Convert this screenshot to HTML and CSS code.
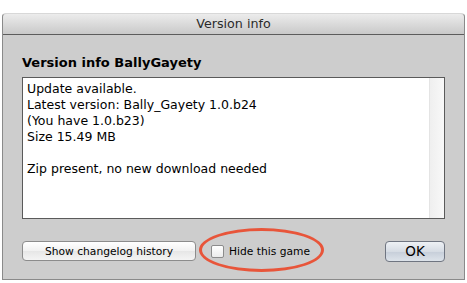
FILE: index.html
```html
<!DOCTYPE html>
<html>
<head>
	<title>Version info</title>
	<meta name="viewport" content="width=device-width, initial-scale=1" />
	<link rel="stylesheet" href="styles.css">
</head>
<body>
	<div class="window">
		<div class="titlebar">Version info</div>
		<div class="content">
			<h1 class="heading">Version info BallyGayety</h1>
			<div class="textbox">
				<div class="text">
					<div>Update available.</div>
					<div>Latest version: Bally_Gayety 1.0.b24</div>
					<div>(You have 1.0.b23)</div>
					<div>Size 15.49 MB</div>
					<div>&nbsp;</div>
					<div>Zip present, no new download needed</div>
				</div>
				<div class="scrolltrack"></div>
			</div>
			<div class="buttons">
				<button class="button btn-changelog">Show changelog history</button>
				<label class="check">
					<span class="box"></span>
					<span>Hide this game</span>
					<span class="ring"></span>
				</label>
				<div class="spacer"></div>
				<button class="button btn-ok">OK</button>
			</div>
		</div>
	</div>
</body>
</html>
```

FILE: styles.css
```css
body {
	margin: 0;
	background-color: #FFFFFF;
	font-family: "DejaVu Sans", "Liberation Sans", sans-serif;
	font-size: 12px;
	color: #000000;
}

.window {
	margin: 13px 2px 1px 2px;
	border: 1px solid #8a8a8a;
	border-top-color: #d8d8d8;
	border-radius: 4px 4px 0 0;
	background-color: #cdcdcd;
	height: 267px;
	box-sizing: border-box;
}

.titlebar {
	height: 20px;
	line-height: 19px;
	text-align: center;
	font-size: 12.7px;
	color: #2a2a2a;
	background: linear-gradient(#ececec, #c9c9c9);
	border-bottom: 1px solid #5c5c5c;
	border-radius: 4px 4px 0 0;
}

.content {
	padding: 0 19px 0 19px;
}

.heading {
	margin: 0;
	padding-top: 20px;
	height: 22px;
	font-size: 13px;
	font-weight: bold;
	line-height: 16px;
}

.textbox {
	display: flex;
	height: 142px;
	box-sizing: border-box;
	border: 1px solid #5a5a5a;
	background-color: #FFFFFF;
}

.text {
	flex: 1;
	padding: 3px 4px;
	line-height: 16px;
	font-size: 12.5px;
}

.scrolltrack {
	width: 14px;
	border-left: 1px solid #e4e4e4;
	background: linear-gradient(to right, #efefef, #f8f8f8);
}

.buttons {
	display: flex;
	align-items: center;
	margin-top: 22px;
	height: 20px;
}

.button {
	height: 20px;
	padding: 0;
	font-family: "DejaVu Sans", "Liberation Sans", sans-serif;
	font-size: 10.7px;
	color: #000000;
	border: 1px solid #8c8c8c;
	border-radius: 4px;
	background: linear-gradient(#ffffff, #f1f1f1 50%, #e6e6e6 51%, #f4f4f4);
}

.btn-changelog {
	width: 174px;
}

.btn-ok {
	width: 60px;
	height: 21px;
	font-size: 13.5px;
	border-color: #6f7581;
	background: linear-gradient(#eef1f5, #d6dce4 50%, #c6ced9 51%, #dde3ea);
}

.check {
	position: relative;
	display: flex;
	align-items: center;
	align-self: stretch;
	margin-left: 15px;
	font-size: 10.7px;
}

.box {
	width: 11px;
	height: 11px;
	margin-right: 5px;
	border: 1px solid #8c8c8c;
	border-radius: 2px;
	background: linear-gradient(#ffffff, #ececec);
}

.ring {
	position: absolute;
	left: -12px;
	top: -13px;
	width: 119px;
	height: 38px;
	border: 3px solid #e8553a;
	border-radius: 50%;
}

.spacer {
	flex: 1;
}
```
